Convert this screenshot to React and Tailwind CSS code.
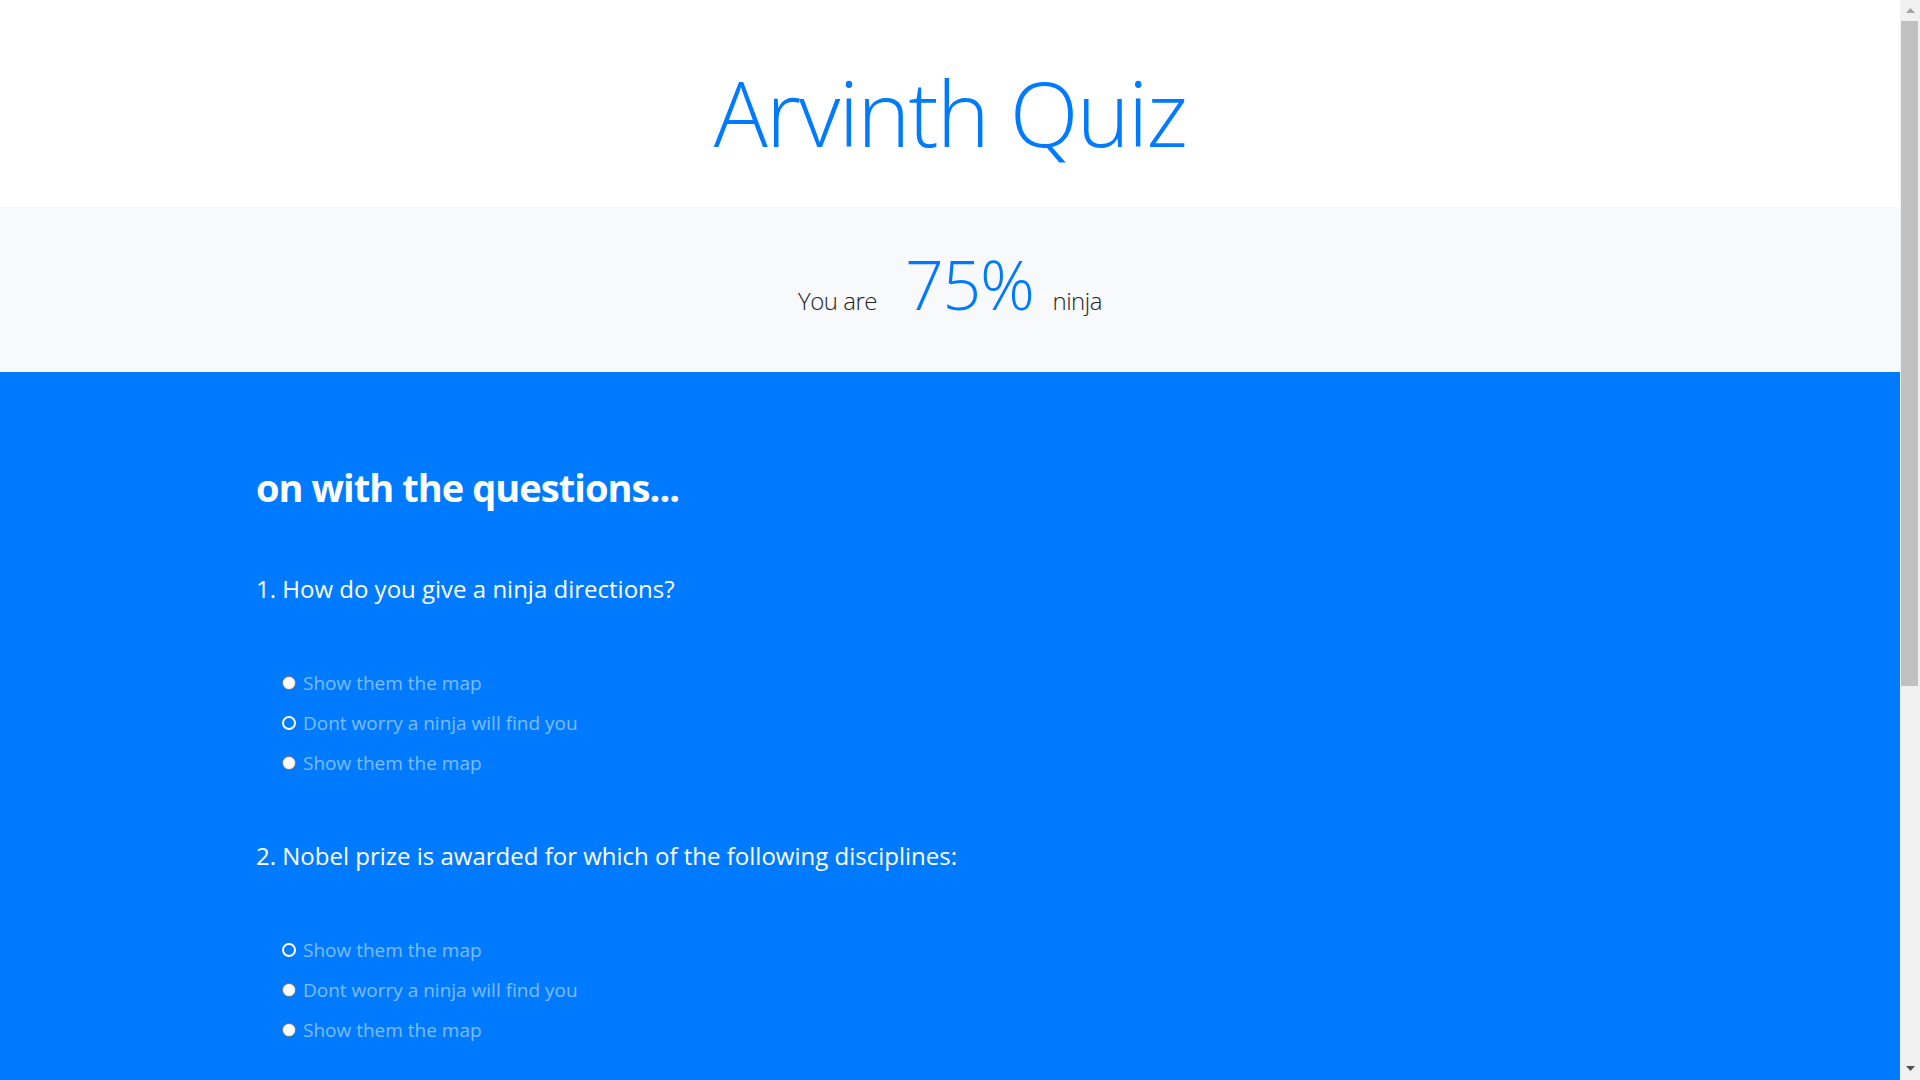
const questions = [
  {
    id: 1,
    text: "How do you give a ninja directions?",
    picked: 1,
    options: ["Show them the map", "Dont worry a ninja will find you", "Show them the map"],
  },
  {
    id: 2,
    text: "Nobel prize is awarded for which of the following disciplines:",
    picked: 0,
    options: ["Show them the map", "Dont worry a ninja will find you", "Show them the map"],
  },
];

const Radio = ({ checked }) =>
  checked ? (
    <span className="inline-block w-[14px] h-[14px] rounded-full border-[2.5px] border-white shrink-0" />
  ) : (
    <span className="inline-block w-[14px] h-[14px] rounded-full bg-white border border-[#767676] shrink-0" />
  );

// fake window scrollbar, the page is longer than the viewport
const ScrollBar = () => (
  <aside className="w-[20px] h-full shrink-0 bg-[#f1f1f1] flex flex-col">
    <div className="h-[21px] flex items-center justify-center">
      <svg width="9" height="5" viewBox="0 0 9 5">
        <path d="M4.5 0 L9 5 L0 5 Z" fill="#a3a3a3" />
      </svg>
    </div>
    <div className="ml-[1px] mr-[2px] h-[665px] bg-[#c1c1c1]" />
    <div className="flex-1" />
    <div className="h-[24px] flex items-center justify-center">
      <svg width="9" height="5" viewBox="0 0 9 5">
        <path d="M0 0 L9 0 L4.5 5 Z" fill="#505050" />
      </svg>
    </div>
  </aside>
);

const App = () => {
  return (
    <div className="w-full h-screen flex overflow-hidden font-['Open_Sans',sans-serif]">
      <main className="flex-1 h-full overflow-hidden">
        <header className="h-[207px] bg-white pt-[67px]">
          <h1 className="text-center text-[90px] leading-[90px] font-light tracking-[-0.02em] text-[#007bff]">
            Arvinth Quiz
          </h1>
        </header>

        <div className="h-[165px] bg-[#f8f9fa] pt-[43px]">
          <div className="flex items-baseline justify-center">
            <span className="text-[24px] font-light tracking-[-0.02em] text-[#212529]">You are</span>
            <span className="ml-[28px] mr-[19px] text-[68px] leading-[68px] font-light tracking-[-0.02em] text-[#007bff]">
              75%
            </span>
            <span className="text-[24px] font-light tracking-[-0.02em] text-[#212529]">ninja</span>
          </div>
        </div>

        <section className="bg-[#007bff] pt-[91px] pb-[700px] px-[256px] text-white">
          <h2 className="text-[38px] leading-[48px] font-bold tracking-[-0.025em] mb-[62px]">
            on with the questions...
          </h2>

          <div className="flex flex-col gap-[57px]">
            {questions.map((q) => (
              <div key={q.id}>
                <h4 className="text-[24px] leading-[32px] mb-[58px]">
                  {q.id}. {q.text}
                </h4>
                <ul className="pl-[26px]">
                  {q.options.map((opt, i) => (
                    <li
                      key={i}
                      className="flex items-center h-[40px] gap-[7px] text-[19px] leading-[40px] text-white/50"
                    >
                      <Radio checked={q.picked === i} />
                      <span>{opt}</span>
                    </li>
                  ))}
                </ul>
              </div>
            ))}
          </div>
        </section>
      </main>
      <ScrollBar />
    </div>
  );
};

export default App;
